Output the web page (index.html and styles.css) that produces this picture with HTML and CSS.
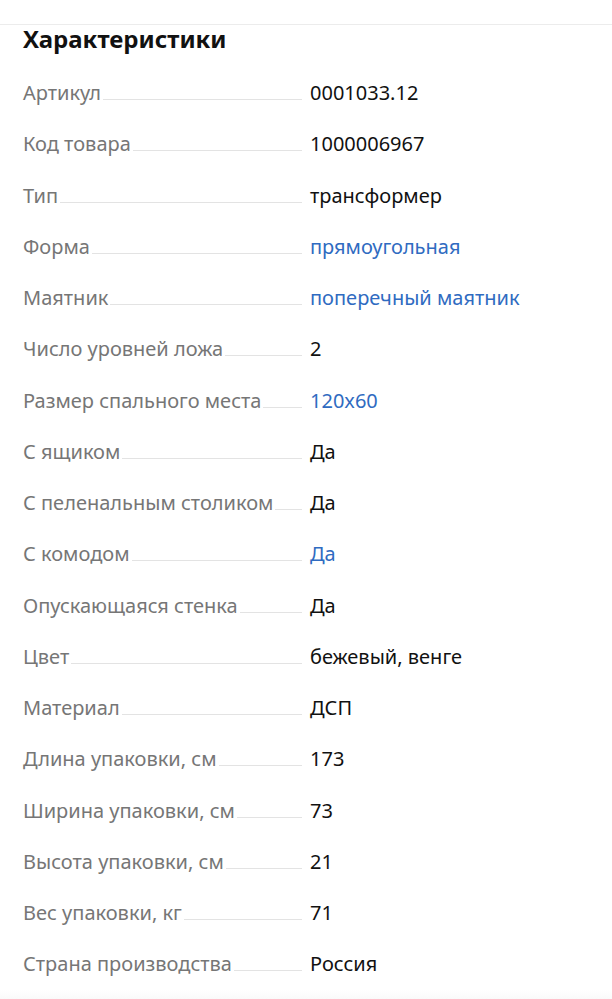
FILE: index.html
```html
<!DOCTYPE html>
<html lang="ru">
<head>
    <meta charset="UTF-8">
    <meta name="viewport" content="width=device-width, initial-scale=1.0">
    <title>Характеристики</title>
    <link rel="stylesheet" href="styles.css">
</head>
<body>
    <div class="topbar"></div>

    <section class="specs">
        <h2>Характеристики</h2>

        <div class="row"><div class="name"><span>Артикул</span><i></i></div><div class="val">0001033.12</div></div>
        <div class="row"><div class="name"><span>Код товара</span><i></i></div><div class="val">1000006967</div></div>
        <div class="row"><div class="name"><span>Тип</span><i></i></div><div class="val">трансформер</div></div>
        <div class="row"><div class="name"><span>Форма</span><i></i></div><div class="val"><a href="#">прямоугольная</a></div></div>
        <div class="row"><div class="name"><span>Маятник</span><i></i></div><div class="val"><a href="#">поперечный маятник</a></div></div>
        <div class="row"><div class="name"><span>Число уровней ложа</span><i></i></div><div class="val">2</div></div>
        <div class="row"><div class="name"><span>Размер спального места</span><i></i></div><div class="val"><a href="#">120x60</a></div></div>
        <div class="row"><div class="name"><span>С ящиком</span><i></i></div><div class="val">Да</div></div>
        <div class="row"><div class="name"><span>С пеленальным столиком</span><i></i></div><div class="val">Да</div></div>
        <div class="row"><div class="name"><span>С комодом</span><i></i></div><div class="val"><a href="#">Да</a></div></div>
        <div class="row"><div class="name"><span>Опускающаяся стенка</span><i></i></div><div class="val">Да</div></div>
        <div class="row"><div class="name"><span>Цвет</span><i></i></div><div class="val">бежевый, венге</div></div>
        <div class="row"><div class="name"><span>Материал</span><i></i></div><div class="val">ДСП</div></div>
        <div class="row"><div class="name"><span>Длина упаковки, см</span><i></i></div><div class="val">173</div></div>
        <div class="row"><div class="name"><span>Ширина упаковки, см</span><i></i></div><div class="val">73</div></div>
        <div class="row"><div class="name"><span>Высота упаковки, см</span><i></i></div><div class="val">21</div></div>
        <div class="row"><div class="name"><span>Вес упаковки, кг</span><i></i></div><div class="val">71</div></div>
        <div class="row"><div class="name"><span>Страна производства</span><i></i></div><div class="val">Россия</div></div>
    </section>

    <div class="bottom-fade"></div>
</body>
</html>
```

FILE: styles.css
```css
body {
    margin: 0;
    font-family: "Noto Sans", Arial, sans-serif;
    background-color: #fff;
    color: #111;
}
.topbar {
    height: 24px;
    border-bottom: 1px solid #ececec;
}
.specs {
    padding: 0 23px;
}
.specs h2 {
    margin: 0;
    font-size: 24px;
    line-height: 28px;
    font-weight: 700;
    color: #111;
    height: 42px;
}
.row {
    display: grid;
    grid-template-columns: 279px 1fr;
    column-gap: 8px;
    height: 51.25px;
    align-items: center;
    font-size: 20px;
}
.name {
    display: flex;
    align-items: baseline;
    color: #767676;
}
.name span {
    white-space: nowrap;
}
.name i {
    flex: 1;
    margin-left: 2px;
    border-bottom: 1px solid #e3e3e3;
}
.val {
    color: #111;
}
.val a {
    color: #2f6bc1;
    text-decoration: none;
}
.bottom-fade {
    height: 20px;
    background: linear-gradient(#fff, #f3f3f3);
}
```
